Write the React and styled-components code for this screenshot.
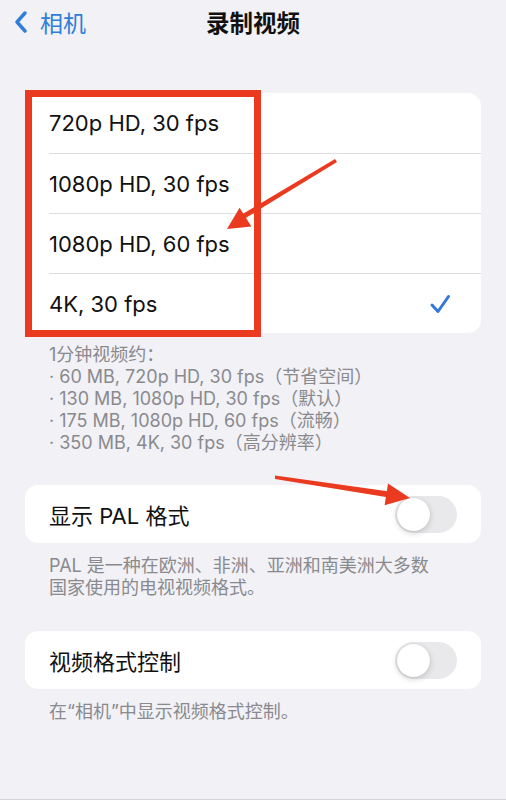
import React from 'react';
import styled, { createGlobalStyle } from 'styled-components';

const GlobalStyle = createGlobalStyle`
    html, body {
        margin: 0;
        padding: 0;
        background: #f1f1f6;
    }
    body {
        font-family: Inter, "Noto Sans CJK SC", sans-serif;
        -webkit-font-smoothing: antialiased;
    }
`;

const Page = styled.div`
    position: relative;
    width: 506px;
    height: 800px;
    box-sizing: border-box;
    overflow: hidden;
    background: #f1f1f6;
    border-bottom: 1px solid #d3d3d8;
`;

const NavBar = styled.div`
    display: grid;
    grid-template-columns: 1fr auto 1fr;
    align-items: center;
    height: 44px;
    padding: 0 14px;
`;

const Back = styled.div`
    display: flex;
    align-items: center;
    gap: 12px;
    color: #2f7ed8;
    font-size: 23px;
    font-family: "Noto Sans CJK SC", sans-serif;
`;

const Title = styled.div`
    font-size: 23.5px;
    font-weight: 600;
    color: #111;
    font-family: "Noto Sans CJK SC", sans-serif;
`;

const Section = styled.div`
    position: relative;
    margin: ${p => p.$top}px 25px 0;
`;

const Card = styled.div`
    background: #fff;
    border-radius: 13px;
    overflow: hidden;
`;

const Row = styled.div`
    padding-left: 24px;
`;

const RowBody = styled.div`
    display: flex;
    align-items: center;
    justify-content: space-between;
    height: ${p => p.$height}px;
    padding-right: ${p => p.$right}px;
    border-top: ${p => (p.$first ? 'none' : '1px solid #dedee2')};
    box-sizing: border-box;
`;

const Label = styled.span`
    font-size: 22px;
    color: #111;
`;

const Footer = styled.div`
    padding: ${p => p.$pad}px 24px 0;
    font-size: 18px;
    line-height: 22px;
    color: #8a8a8e;
`;

const Highlight = styled.div`
    position: absolute;
    left: 0;
    top: -3px;
    width: 236px;
    height: 247px;
    box-sizing: border-box;
    border: 7px solid #ea3a20;
    pointer-events: none;
`;

const Track = styled.div`
    display: flex;
    align-items: center;
    width: 62px;
    height: 37px;
    padding: 2px;
    box-sizing: border-box;
    border-radius: 19px;
    background: #e9e9eb;
`;

const Knob = styled.div`
    width: 33px;
    height: 33px;
    border-radius: 50%;
    background: #fff;
    box-shadow: 0 2px 6px rgba(0, 0, 0, 0.18), 0 0 0 0.5px rgba(0, 0, 0, 0.06);
`;

const Overlay = styled.svg`
    position: absolute;
    left: 0;
    top: 0;
    pointer-events: none;
`;

const options = ['720p HD, 30 fps', '1080p HD, 30 fps', '1080p HD, 60 fps', '4K, 30 fps'];

const sizes = [
    '1分钟视频约：',
    '· 60 MB, 720p HD, 30 fps（节省空间）',
    '· 130 MB, 1080p HD, 30 fps（默认）',
    '· 175 MB, 1080p HD, 60 fps（流畅）',
    '· 350 MB, 4K, 30 fps（高分辨率）',
];

const palNote = ['PAL 是一种在欧洲、非洲、亚洲和南美洲大多数', '国家使用的电视视频格式。'];

const Chevron = () => (
    <svg width="14" height="22" viewBox="0 0 14 22">
        <path d="M11 2 L3 11 L11 20" fill="none" stroke="#2f7ed8" strokeWidth="3.4" strokeLinecap="round" strokeLinejoin="round" />
    </svg>
);

const Check = () => (
    <svg width="22" height="22" viewBox="0 0 22 22">
        <path d="M3 12 L9 18.5 L19.5 3.5" fill="none" stroke="#3478d8" strokeWidth="3" strokeLinecap="round" strokeLinejoin="round" />
    </svg>
);

const Toggle = () => (
    <Track>
        <Knob />
    </Track>
);

const App = () => {
    const selected = 3;
    return (
        <Page>
            <GlobalStyle />
            <NavBar>
                <Back>
                    <Chevron />
                    相机
                </Back>
                <Title>录制视频</Title>
                <span />
            </NavBar>

            <Section $top={49}>
                <Card>
                    {options.map((o, i) => (
                        <Row key={o}>
                            <RowBody $height={60} $right={30} $first={i === 0}>
                                <Label>{o}</Label>
                                {i === selected && <Check />}
                            </RowBody>
                        </Row>
                    ))}
                </Card>
                <Highlight />
                <Footer $pad={11}>
                    {sizes.map(s => (
                        <div key={s}>{s}</div>
                    ))}
                </Footer>
            </Section>

            <Section $top={31}>
                <Card>
                    <Row>
                        <RowBody $height={58} $right={24} $first>
                            <Label>显示 PAL 格式</Label>
                            <Toggle />
                        </RowBody>
                    </Row>
                </Card>
                <Footer $pad={12}>
                    {palNote.map(s => (
                        <div key={s}>{s}</div>
                    ))}
                </Footer>
            </Section>

            <Section $top={32}>
                <Card>
                    <Row>
                        <RowBody $height={58} $right={24} $first>
                            <Label>视频格式控制</Label>
                            <Toggle />
                        </RowBody>
                    </Row>
                </Card>
                <Footer $pad={12}>在“相机”中显示视频格式控制。</Footer>
            </Section>

            <Overlay width="506" height="800" viewBox="0 0 506 800">
                <path d="M335 159 L337 162 L244 219 L241 215 Z" fill="#ea3a20" />
                <polygon points="227,229 239.6,207.8 251.4,226.4" fill="#ea3a20" />
                <path d="M275 475.5 L275 479 L389 497.5 L389.5 491.5 Z" fill="#ea3a20" />
                <polygon points="410,498 388,483.4 384.6,505.2" fill="#ea3a20" />
            </Overlay>
        </Page>
    );
};

export default App;
